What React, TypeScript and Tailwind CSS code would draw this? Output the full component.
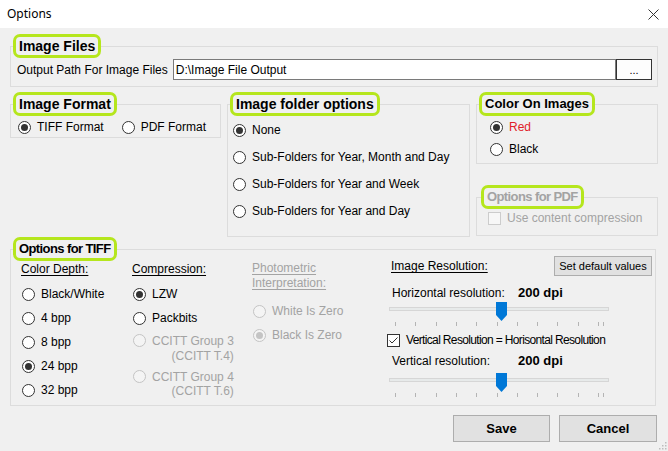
import clsx from 'clsx'
import type { ReactNode } from 'react'

// --------------- Small Win32-style controls ---------------

function Radio({ checked, disabled, className }: { checked?: boolean; disabled?: boolean; className?: string }) {
  return (
    <span
      className={clsx(
        'flex h-[13px] w-[13px] shrink-0 items-center justify-center rounded-full border',
        disabled ? 'border-[#c4c4c4] bg-[#f4f4f4]' : 'border-[#333333] bg-white',
        className
      )}
    >
      {checked && (
        <span className={clsx('h-[7px] w-[7px] rounded-full', disabled ? 'bg-[#c4c4c4]' : 'bg-[#333333]')} />
      )}
    </span>
  )
}

function RadioItem({
  label,
  checked,
  disabled,
  className,
  textClass,
}: {
  label: string
  checked?: boolean
  disabled?: boolean
  className?: string
  textClass?: string
}) {
  return (
    <div className={clsx('flex h-[18px] items-center gap-[6px]', disabled && 'text-[#a3a3a3]', className)}>
      <Radio checked={checked} disabled={disabled} />
      <span className={textClass}>{label}</span>
    </div>
  )
}

function Checkbox({ checked, disabled }: { checked?: boolean; disabled?: boolean }) {
  return (
    <span
      className={clsx(
        'flex h-[13px] w-[13px] shrink-0 items-center justify-center border',
        disabled ? 'border-[#cccccc] bg-[#f7f7f7]' : 'border-[#333333] bg-white'
      )}
    >
      {checked && (
        <svg width="11" height="11" viewBox="0 0 11 11">
          <path d="M1.5 5.5 L4 8 L9.5 2.5" fill="none" stroke="#333333" strokeWidth="1" />
        </svg>
      )}
    </span>
  )
}

function Slider() {
  const ticks = Array.from({ length: 11 }, (_, i) => Math.round(6 + i * 20.3))
  return (
    <svg width="222" height="26" viewBox="0 0 222 26" className="ml-[1px] block">
      <rect x="0.5" y="5.5" width="219" height="3" fill="#e7eaea" stroke="#d6d6d6" />
      {[...ticks, 214].map((x) => (
        <line key={x} x1={x + 0.5} x2={x + 0.5} y1="20" y2="24" stroke="#b4b4b4" strokeWidth="1" />
      ))}
      <path d="M107 0 H118 V13 L112.5 19 L107 13 Z" fill="#0078d7" />
    </svg>
  )
}

// --------------- Group box ---------------

function Group({
  title,
  titleClass,
  muted,
  className,
  children,
}: {
  title: string
  titleClass?: string
  muted?: boolean
  className?: string
  children: ReactNode
}) {
  return (
    <fieldset className={clsx('min-w-0 border border-[#dcdcdc]', className)}>
      <legend
        className={clsx(
          'ml-[2px] rounded-[7px] border-[3px] border-[#b5e61d] px-[3px] font-bold leading-[18px]',
          muted ? 'text-[#a3a3a3]' : 'text-black',
          titleClass ?? 'text-[14px]'
        )}
      >
        {title}
      </legend>
      {children}
    </fieldset>
  )
}

// --------------- Dialog ---------------

export default function App() {
  return (
    <div className="flex h-[451px] w-[668px] flex-col overflow-hidden bg-[#f0f0f0] font-['Liberation_Sans',Arial,sans-serif] text-[12px] text-black">
      {/* Title bar */}
      <div className="flex h-[28px] shrink-0 items-center justify-between bg-white pl-[7px] pr-[9px]">
        <span className="font-['Noto_Sans',sans-serif] text-[12px] leading-none">Options</span>
        <svg width="11" height="11" viewBox="0 0 11 11">
          <path d="M0.5 0.5 L10.5 10.5 M10.5 0.5 L0.5 10.5" stroke="#333333" strokeWidth="1" />
        </svg>
      </div>

      <div className="relative flex flex-1 flex-col px-[10px]">
        {/* Image files */}
        <Group title="Image Files" className="mt-[6px] pb-[6px]">
          <div className="mt-[1px] flex h-[21px] items-center pl-[6px] pr-[5px]">
            <span className="mr-[5px]">Output Path For Image Files</span>
            <div className="flex h-full flex-1 items-center border border-[#7a7a7a] bg-white pl-[2px]">
              D:\Image File Output
            </div>
            <button className="flex h-full w-[36px] items-end justify-center border border-[#333333] bg-[#fdfdfd] pb-[3px] text-[11px] leading-none">
              ...
            </button>
          </div>
        </Group>

        <div className="mt-[5px] flex items-start gap-[6px]">
          <Group title="Image Format" className="w-[211px] pb-[1px]">
            <div className="mt-[2px] flex h-[18px] items-center pl-[7px]">
              <RadioItem label="TIFF Format" checked />
              <RadioItem label="PDF Format" className="ml-[18px]" />
            </div>
          </Group>

          <Group title="Image folder options" className="w-[243px] pb-[15px]">
            <div className="mt-[4px] flex flex-col gap-[7px] pl-[5px]">
              <RadioItem label="None" checked className="h-[20px]" />
              <RadioItem label="Sub-Folders for Year, Month and Day" className="h-[20px]" />
              <RadioItem label="Sub-Folders for Year and Week" className="h-[20px]" />
              <RadioItem label="Sub-Folders for Year and Day" className="h-[20px]" />
            </div>
          </Group>

          <div className="flex flex-1 flex-col">
            <Group title="Color On Images" titleClass="text-[13px]" className="pb-[5px]">
              <div className="mt-[2px] flex flex-col gap-[4px] pl-[13px]">
                <RadioItem label="Red" checked textClass="text-[#e0202a]" />
                <RadioItem label="Black" />
              </div>
            </Group>
            <Group
              title="Options for PDF"
              muted
              titleClass="text-[13px] tracking-[-0.6px] ml-[4px]"
              className="mt-[21px] pb-[9px]"
            >
              <div className="mt-[1px] flex h-[16px] items-center gap-[6px] pl-[11px] text-[#a3a3a3]">
                <Checkbox disabled />
                <span>Use content compression</span>
              </div>
            </Group>
          </div>
        </div>

        {/* TIFF options */}
        <Group
          title="Options for TIFF"
          titleClass="text-[13px] tracking-[-0.6px]"
          className="mr-[2px] pb-[6px]"
        >
          <div className="flex items-start pl-[10px] pr-[3px]">
            <div className="flex w-[111px] flex-col">
              <span className="leading-[16px] underline underline-offset-2">Color Depth:</span>
              <div className="ml-[1px] mt-[8px] flex flex-col gap-[6px]">
                <RadioItem label="Black/White" />
                <RadioItem label="4 bpp" />
                <RadioItem label="8 bpp" />
                <RadioItem label="24 bpp" checked />
                <RadioItem label="32 bpp" />
              </div>
            </div>

            <div className="flex w-[120px] flex-col">
              <span className="leading-[16px] underline underline-offset-2">Compression:</span>
              <div className="ml-[1px] mt-[8px] flex flex-col gap-[6px]">
                <RadioItem label="LZW" checked />
                <RadioItem label="Packbits" />
                <div className="flex items-start gap-[6px] text-[#a3a3a3]">
                  <Radio disabled className="mt-[1px]" />
                  <div className="flex flex-col items-end">
                    <span className="leading-[16px]">CCITT Group 3</span>
                    <span className="leading-[14px]">(CCITT T.4)</span>
                  </div>
                </div>
                <div className="flex items-start gap-[6px] text-[#a3a3a3]">
                  <Radio disabled className="mt-[1px]" />
                  <div className="flex flex-col items-end">
                    <span className="leading-[16px]">CCITT Group 4</span>
                    <span className="leading-[12px]">(CCITT T.6)</span>
                  </div>
                </div>
              </div>
            </div>

            <div className="flex w-[136px] flex-col text-[#a3a3a3]">
              <span className="leading-[15px] underline underline-offset-2">Photometric</span>
              <span className="leading-[15px] underline underline-offset-2">Interpretation:</span>
              <div className="ml-[1px] mt-[11px] flex flex-col gap-[6px]">
                <RadioItem label="White Is Zero" disabled />
                <RadioItem label="Black Is Zero" checked disabled />
              </div>
            </div>

            <div className="-mt-[5px] flex flex-1 flex-col">
              <div className="flex h-[20px] items-center justify-between">
                <span className="ml-[3px] underline underline-offset-2">Image Resolution:</span>
                <button className="h-[20px] w-[98px] border border-[#adadad] bg-[#e1e1e1] text-[11px]">
                  Set default values
                </button>
              </div>
              <div className="mt-[9px] flex h-[16px] items-center pl-[4px]">
                <span className="w-[126px]">Horizontal resolution:</span>
                <span className="text-[13px] font-bold">200 dpi</span>
              </div>
              <div className="mt-[1px]">
                <Slider />
              </div>
              <div className="-ml-[1px] mt-[5px] flex h-[14px] items-center gap-[6px]">
                <Checkbox checked />
                <span className="tracking-[-0.65px]">Vertical Resolution = Horisontal Resolution</span>
              </div>
              <div className="mt-[6px] flex h-[16px] items-center pl-[4px]">
                <span className="w-[126px]">Vertical resolution:</span>
                <span className="text-[13px] font-bold">200 dpi</span>
              </div>
              <div className="mt-[4px]">
                <Slider />
              </div>
            </div>
          </div>
        </Group>

        {/* Dialog buttons */}
        <div className="mt-[9px] flex justify-end gap-[9px] pr-[1px]">
          <button className="h-[27px] w-[97px] border border-[#adadad] bg-[#e1e1e1] text-[13px] font-bold">Save</button>
          <button className="h-[27px] w-[98px] border border-[#adadad] bg-[#e1e1e1] text-[13px] font-bold">Cancel</button>
        </div>

        {/* Size grip */}
        <svg width="9" height="9" viewBox="0 0 9 9" className="absolute bottom-[1px] right-[1px]">
          {[
            [7, 1],
            [7, 4],
            [4, 4],
            [7, 7],
            [4, 7],
            [1, 7],
          ].map(([x, y]) => (
            <rect key={`${x}-${y}`} x={x} y={y} width="1.5" height="1.5" fill="#bdbdbd" />
          ))}
        </svg>
      </div>
    </div>
  )
}
